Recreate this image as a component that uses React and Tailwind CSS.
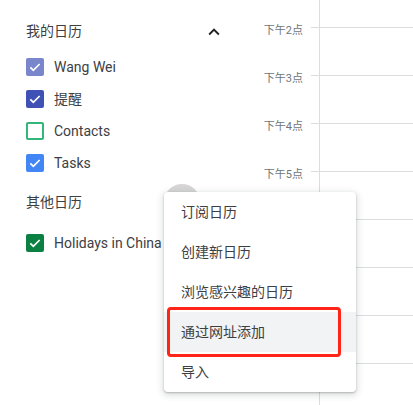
import React from "react";

const font = { fontFamily: 'Roboto, "Noto Sans CJK SC", sans-serif' };

const Check = () => (
  <svg viewBox="0 0 24 24" className="w-[16px] h-[16px]" fill="none">
    <path d="M5 12.5l4.5 4.5L19 7.5" stroke="white" strokeWidth="2.6" />
  </svg>
);

const CalRow = ({ color, label, outline }) => (
  <div className="h-[32px] flex items-center gap-[10px] pl-[26px]">
    {outline ? (
      <div className={`w-[18px] h-[18px] rounded-[2px] border-2 ${color} bg-white`} />
    ) : (
      <div className={`w-[18px] h-[18px] rounded-[2px] ${color} flex items-center justify-center`}>
        <Check />
      </div>
    )}
    <span className="text-[14px] text-[#3c4043] whitespace-nowrap">{label}</span>
  </div>
);

const hours = ["下午2点", "下午3点", "下午4点", "下午5点", "", "", "", ""];
const menu = ["订阅日历", "创建新日历", "浏览感兴趣的日历", "通过网址添加", "导入"];

export default function App() {
  return (
    <div className="relative w-[413px] h-[405px] overflow-hidden bg-white flex" style={font}>
      {/* Sidebar */}
      <div className="w-[240px] shrink-0 pt-[11px]">
        <div className="h-[40px] flex items-center justify-between pl-[26px] pr-[15px]">
          <span className="text-[14px] text-[#3c4043]">我的日历</span>
          <svg viewBox="0 0 24 24" className="w-[22px] h-[22px] mt-[2px]" fill="#202124">
            <path d="M7.41 15.41L12 10.83l4.59 4.58L18 14l-6-6-6 6z" />
          </svg>
        </div>
        <CalRow color="bg-[#7986cb]" label="Wang Wei" />
        <CalRow color="bg-[#3f51b5]" label="提醒" />
        <CalRow color="border-[#33b679]" label="Contacts" outline />
        <CalRow color="bg-[#4285f4]" label="Tasks" />
        <div className="h-[40px] mt-[3px] flex items-center pl-[26px]">
          <span className="text-[14px] text-[#3c4043]">其他日历</span>
        </div>
        <div className="mt-[5px]">
          <CalRow color="bg-[#0b8043]" label="Holidays in China" />
        </div>
      </div>

      {/* Time gutter */}
      <div className="w-[79px] shrink-0 pt-[27px]">
        {hours.map((h, i) => (
          <div key={i} className="h-[48px] flex items-start justify-end">
            <span className="mt-[-3px] leading-[14px] text-[11px] text-[#70757a] whitespace-nowrap">{h}</span>
            <div className="w-[8px]" />
            <div className="w-[8px] border-t border-[#dadce0]" />
          </div>
        ))}
      </div>

      {/* Grid */}
      <div className="flex-1 border-l border-[#dadce0] pt-[27px]">
        {hours.map((_, i) => (
          <div key={i} className="h-[48px] border-t border-[#dadce0]" />
        ))}
      </div>

      {/* Hover circle behind menu */}
      <div className="absolute left-[164px] top-[184px] w-[36px] h-[36px] rounded-full bg-[#d6d6d6]" />

      {/* Menu */}
      <div className="absolute left-[164px] top-[192px] w-[192px] bg-white rounded-[4px] shadow-[0_2px_6px_2px_rgba(60,64,67,0.15),0_1px_2px_rgba(60,64,67,0.3)]">
        {menu.map((m, i) => (
          <div
            key={m}
            className={`h-[40px] flex items-center pl-[17px] text-[14px] text-[#3c4043] ${i === 3 ? "bg-[#f1f3f4]" : ""}`}
          >
            {m}
          </div>
        ))}
      </div>

      {/* Annotation box */}
      <div className="absolute left-[167px] top-[307px] w-[174px] h-[50px] border-[3px] border-[#ff2418] rounded-[4px]" />
    </div>
  );
}
